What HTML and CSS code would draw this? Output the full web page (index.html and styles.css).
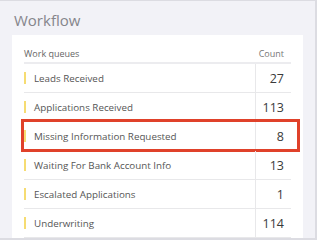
FILE: index.html
```html
<!DOCTYPE html>
<html>
<head>
<meta charset="utf-8">
<link rel="stylesheet" href="styles.css">
</head>
<body>
<div class="panel">
  <h1 class="title">Workflow</h1>
  <div class="card">
    <div class="table">
      <div class="head">
        <div class="hname">Work queues</div>
        <div class="hcount">Count</div>
      </div>
      <div class="row"><div class="name"><span class="bar"></span>Leads Received</div><div class="count">27</div></div>
      <div class="row"><div class="name"><span class="bar"></span>Applications Received</div><div class="count">113</div></div>
      <div class="row selected"><div class="name"><span class="bar"></span>Missing Information Requested</div><div class="count">8</div><span class="highlight"></span></div>
      <div class="row"><div class="name"><span class="bar"></span>Waiting For Bank Account Info</div><div class="count">13</div></div>
      <div class="row"><div class="name"><span class="bar"></span>Escalated Applications</div><div class="count">1</div></div>
      <div class="row"><div class="name"><span class="bar"></span>Underwriting</div><div class="count">114</div></div>
    </div>
  </div>
</div>
</body>
</html>
```
FILE: styles.css
```css
html, body {
  margin: 0;
  padding: 0;
  width: 319px;
  height: 240px;
  overflow: hidden;
  background: #ffffff;
  font-family: "Open Sans", "Liberation Sans", sans-serif;
}
.panel {
  box-sizing: border-box;
  width: 317px;
  height: 240px;
  background: #f2f2f7;
  border-top: 1px solid #dcdce2;
  border-right: 2px solid #dcdce2;
  border-bottom: 2px solid #dcdce2;
  padding: 0 12px 0 12px;
  overflow: hidden;
}
.title {
  margin: 0;
  padding: 11px 0 0 2px;
  height: 23px;
  font-size: 15px;
  font-weight: 400;
  color: #85858b;
  line-height: 17px;
}
.card {
  background: #ffffff;
  padding: 10px 12px 0 12px;
  height: 300px;
}
.table {
  display: flex;
  flex-direction: column;
}
.head {
  display: flex;
  align-items: center;
  height: 17px;
  border-bottom: 2px solid #ececef;
  font-size: 9px;
  color: #666;
}
.hname { flex: 1; }
.hcount { width: 28px; padding-right: 7px; text-align: right; color: #777; }
.row {
  position: relative;
  display: flex;
  height: 28px;
  border-bottom: 1px solid #e8e8ea;
}
.name {
  flex: 1;
  display: flex;
  align-items: center;
  gap: 8px;
  font-size: 9.8px;
  color: #555;
}
.bar {
  width: 2px;
  height: 12px;
  background: #f6dc72;
}
.count {
  width: 28px;
  border-left: 1px solid #e8e8ea;
  padding-right: 7px;
  display: flex;
  align-items: center;
  justify-content: flex-end;
  font-size: 12.5px;
  color: #3a3a3a;
}
.highlight {
  position: absolute;
  left: -3px;
  right: -9px;
  top: -3px;
  bottom: -2px;
  border: 3px solid #e0412a;
  pointer-events: none;
}
```
